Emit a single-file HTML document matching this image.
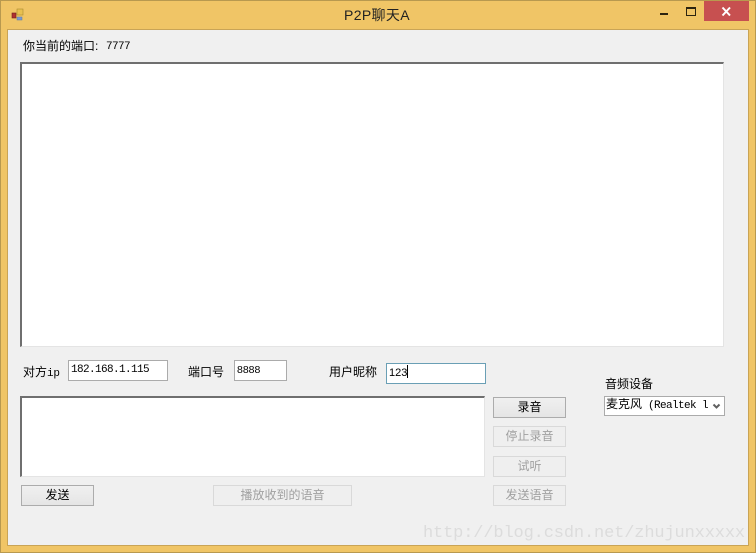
<!DOCTYPE html>
<html><head><meta charset="utf-8"><style>
html,body{margin:0;padding:0}
body{width:756px;height:553px;overflow:hidden;position:relative;background:#f0c566;font-family:"Liberation Sans","Noto Sans CJK SC",sans-serif;font-size:12px;color:#000}
div{position:absolute;box-sizing:border-box;white-space:nowrap}
.frame{left:0;top:0;width:756px;height:553px;border:1px solid #b8994f}
.client{left:8px;top:30px;width:740px;height:515px;background:#f0f0f0;outline:1px solid #c9a456}
.t{line-height:14px;height:14px}
.m{font-family:"Liberation Mono","Noto Sans CJK SC",monospace;font-size:11px;letter-spacing:-.6px}
.rich{background:#fff;border-style:solid;border-width:2px 1px 1px 2px;border-color:#6f6f6f #e4e4e4 #e4e4e4 #6f6f6f}
.inp{background:#fff;border:1px solid #ababab;height:21px;line-height:18px;padding-left:2px}
.btn{border:1px solid #acacac;height:21px;line-height:19px;text-align:center;background:linear-gradient(#f0f0f0,#e5e5e5);width:73px}
.dis{border-color:#d9d9d9;background:#efefef;color:#a0a0a0}
</style></head><body>
<div class="frame"></div>
<div class="client"></div>

<svg style="position:absolute;left:11px;top:8px" width="14" height="14" viewBox="0 0 14 14">
<rect x="1" y="5" width="4" height="5" fill="#b03030" stroke="#702020" stroke-width=".6"/>
<rect x="6" y="1" width="6" height="6" fill="#e8c050" stroke="#a88a30" stroke-width=".6"/>
<rect x="6" y="9" width="5" height="3" fill="#7a9ad0" stroke="#5a78a8" stroke-width=".5"/>
</svg>
<div class="t" style="left:344px;top:7px;font-size:14px;line-height:17px;height:17px;color:#222;letter-spacing:.35px">P2P聊天A</div>

<div style="left:660px;top:13px;width:8px;height:2px;background:#2c2410"></div>
<div style="left:686px;top:7px;width:10px;height:9px;border:1px solid #2c2410;border-top-width:2px"></div>
<div style="left:704px;top:1px;width:45px;height:20px;background:#c75050"></div>
<svg style="position:absolute;left:720px;top:6px" width="13" height="11" viewBox="0 0 13 11"><path d="M2.5 1.5L10 9.5M10 1.5L2.5 9.5" stroke="#fff" stroke-width="2" fill="none"/></svg>

<div class="t" style="left:23px;top:39px">你当前的端口:</div>
<div class="t m" style="left:106px;top:40px">7777</div>
<div class="rich" style="left:20px;top:62px;width:704px;height:285px"></div>

<div class="t" style="left:23px;top:365px">对方<span class="m" style="letter-spacing:-.3px">ip</span></div>
<div class="inp m" style="left:68px;top:360px;width:100px">182.168.1.115</div>
<div class="t" style="left:188px;top:365px">端口号</div>
<div class="inp" style="left:234px;top:360px;width:53px;font-size:10.5px">8888</div>
<div class="t" style="left:329px;top:365px">用户昵称</div>
<div class="inp" style="left:386px;top:363px;width:100px;border-color:#6a9fb5;font-size:11px;line-height:18px">123<span style="display:inline-block;width:1px;height:13px;background:#000;vertical-align:-2px"></span></div>

<div class="t" style="left:605px;top:377px">音频设备</div>
<div class="inp m" style="left:604px;top:396px;width:121px;height:20px;line-height:17px;padding-left:1px;overflow:hidden"><span style="font-size:12px;letter-spacing:0">麦克风</span> (Realtek l</div>
<svg style="position:absolute;left:711px;top:402px" width="12" height="9" viewBox="0 0 12 9"><rect width="12" height="9" fill="#fff"/><path d="M2.5 2.5L5.5 5.5L8.5 2.5" stroke="#606060" stroke-width="2" fill="none"/></svg>

<div class="rich" style="left:20px;top:396px;width:465px;height:81px"></div>

<div class="btn" style="left:493px;top:397px">录音</div>
<div class="btn dis" style="left:493px;top:426px">停止录音</div>
<div class="btn dis" style="left:493px;top:456px">试听</div>
<div class="btn dis" style="left:493px;top:485px">发送语音</div>
<div class="btn" style="left:21px;top:485px">发送</div>
<div class="btn dis" style="left:213px;top:485px;width:139px">播放收到的语音</div>

<div style="left:423px;top:522px;font-family:'Liberation Mono',monospace;font-size:17px;line-height:24px;color:#dcdcdc;letter-spacing:-.14px">http://blog.csdn.net/zhujunxxxxx</div>
</body></html>
